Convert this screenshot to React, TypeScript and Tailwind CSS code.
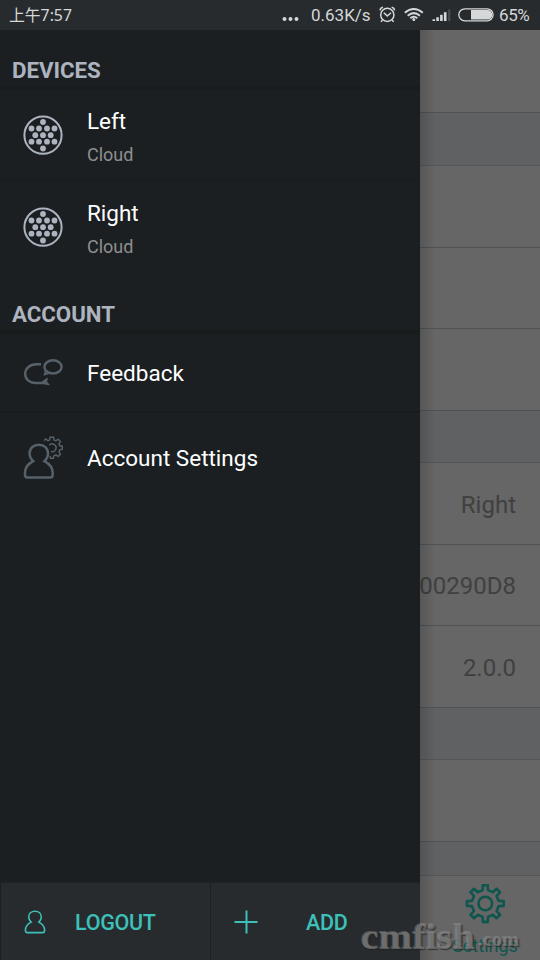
import type { ReactNode } from "react";

function gearPath(cx: number, cy: number, teeth: number, outer: number, inner: number, from = 0, to = teeth) {
  const step = (Math.PI * 2) / teeth;
  const point = (radius: number, angle: number) =>
    `${(cx + radius * Math.sin(angle)).toFixed(2)} ${(cy - radius * Math.cos(angle)).toFixed(2)}`;
  const points: string[] = [];
  for (let i = from; i < to; i++) {
    const a = i * step;
    points.push(point(inner, a - step * 0.25), point(outer, a - step * 0.17), point(outer, a + step * 0.17), point(inner, a + step * 0.25));
  }
  return `M${points.join("L")}${to - from === teeth ? "Z" : ""}`;
}

const SPEAKER_DOTS = [
  [20, 7], [8.5, 13.5], [16, 13.5], [24, 13.5], [31.5, 13.5],
  [12.3, 20.2], [20, 20.2], [27.7, 20.2],
  [8.5, 26.7], [16, 26.7], [24, 26.7], [31.5, 26.7], [20, 33.5],
];

function DeviceIcon() {
  return (
    <svg className="h-10 w-10" viewBox="0 0 40 40">
      <circle cx="20" cy="20.2" r="18.6" fill="none" stroke="#adb4bf" strokeWidth="2" />
      {SPEAKER_DOTS.map(([x, y]) => (
        <circle key={`${x}-${y}`} cx={x} cy={y} r="2.9" fill="#adb4bf" />
      ))}
    </svg>
  );
}

function FeedbackIcon() {
  return (
    <svg className="h-10 w-10" viewBox="0 0 40 40" fill="none" stroke="#57616a" strokeWidth="2.4">
      <path d="M18 11.3H13.5C6.5 11.3 2.2 15.7 2.2 20.7C2.2 26 6.3 30 13 30H21" />
      <path d="M19.5 28.6L24.3 25.2L23.6 28.8L26.2 31.8L20 30.6Z" fill="#57616a" strokeWidth="1" />
      <ellipse cx="30" cy="13.9" rx="8.6" ry="6.6" />
      <path d="M22.8 17L21.6 21.5L26 20.2" strokeWidth="1.6" />
    </svg>
  );
}

function AccountIcon() {
  return (
    <svg className="h-[44px] w-10" viewBox="0 0 40 44" fill="none" stroke="#57616a" strokeWidth="2.5">
      <path d="M10.2 25.2C7.8 23.2 6.6 20.8 6.6 17.3C6.6 12.1 10.4 8.7 15.8 8.7S25 12.1 25 17.3C25 20.8 23.8 23.2 21.4 25.2C26 27.6 29.7 31.5 29.7 37V39Q29.7 41.4 27.4 41.4H4.4Q2 41.4 2 39V37C2 31.5 5.6 27.6 10.2 25.2Z" />
      <path
        d="M21.2 4.6L22.9 2.9L25 4.7L26.8 3.9L27 1.2H30.6L30.9 3.9L33 4.8L35.1 3.1L37.5 5.6L35.9 7.8L36.8 9.8L39.3 10.2V13.5L36.8 13.9L35.9 16L37.5 18.1L35.1 20.5L33 18.9L30.9 19.8L30.4 22.2H27.6L27.1 20"
        strokeWidth="1.4"
      />
      <path d="M26.2 9.3A3.9 3.9 0 1 1 28 15.6" strokeWidth="1.5" />
    </svg>
  );
}

function SectionHeader({ children }: { children: string }) {
  return (
    <h2 className="flex h-[60px] items-end border-b-[4px] border-[#181c1d] pb-[3px] pl-3 text-[22.3px] leading-[26px] font-bold tracking-[-0.05px] text-[#adb4bf]">
      {children}
    </h2>
  );
}

function DeviceRow({ name, className }: { name: string; className: string }) {
  return (
    <div className={`flex items-center pl-[23px] ${className}`}>
      <DeviceIcon />
      <div className="ml-6 flex flex-col gap-[10px] pt-1">
        <span className="text-[22.5px] leading-[26px] text-white">{name}</span>
        <span className="text-[18px] leading-[21px] text-[#8e8f90]">Cloud</span>
      </div>
    </div>
  );
}

function FooterButton({ icon, children, className }: { icon: ReactNode; children: string; className: string }) {
  return (
    <button className={`flex h-full w-[210px] items-center border-l border-[#1c2023] bg-[#272b2e] text-[21.5px] font-medium text-[#3cc0b9] ${className}`}>
      {icon}
      <span className="pt-[2px] leading-[26px]">{children}</span>
    </button>
  );
}

function Cell({ children, className = "h-[81px]" }: { children?: string; className?: string }) {
  return (
    <div className={`box-content flex shrink-0 items-center justify-end border-b border-[#505253] pt-px pr-6 text-[24px] whitespace-nowrap text-[#404040] ${className}`}>
      <span className="pt-px">{children}</span>
    </div>
  );
}

function Gap({ className = "h-[52px]" }: { className?: string }) {
  return <div className={`shrink-0 border-b border-[#545657] bg-[#5f6162] ${className}`} />;
}

function StatusBar() {
  return (
    <header className="flex h-[30px] shrink-0 items-center bg-[#272b2e] pl-[9px] text-[17px] leading-[30px] text-[#d5d7d8]">
      <span className="flex w-[273px] items-center font-['Noto_Sans','Noto_Sans_CJK_SC',sans-serif] text-[15.8px]">上午7:57</span>
      <svg className="h-[30px] w-[18px]" viewBox="0 0 18 30" fill="#d5d7d8">
        <circle cx="2.5" cy="19" r="2" /><circle cx="8.5" cy="19" r="2" /><circle cx="14.5" cy="19" r="2" />
      </svg>
      <span className="ml-[11px] w-[68px]">0.63K/s</span>
      <svg className="h-[30px] w-[118px] shrink-0" viewBox="379 0 118 30" fill="none" stroke="#d5d7d8" strokeWidth="1.5">
        <circle cx="387.3" cy="14.9" r="6.6" />
        <path d="M383.8 12.7L387.3 16L391 12.7M380 10.3Q380.4 7.8 383 7.3M391.6 7.3Q394.2 7.8 394.6 10.3M382.5 20L381 21.9M392.1 20L393.6 21.9" />
        <path d="M404.8 12.7Q413.8 5.4 422.8 12.7M407.7 15.7Q413.8 10.6 419.9 15.7M410.3 18.2Q413.8 15.4 417.3 18.2" strokeWidth="2" />
        <circle cx="413.8" cy="19.5" r="1.5" fill="#d5d7d8" stroke="none" />
        <g fill="#d5d7d8" stroke="none">
          <rect x="432.5" y="19.3" width="2.6" height="1.7" />
          <rect x="436.3" y="17.3" width="2.6" height="3.7" />
          <rect x="440.1" y="14.8" width="2.6" height="6.2" />
          <rect x="443.9" y="12.2" width="2.6" height="8.8" />
          <rect x="448" y="9.5" width="2.4" height="11.5" fill="#484b4e" />
        </g>
        <rect x="458.8" y="8.8" width="34.3" height="12" rx="6" strokeWidth="1.3" />
        <path d="M471 10H487.5A4.8 4.8 0 0 1 487.5 19.6H471Z" fill="#d5d7d8" stroke="none" />
      </svg>
      <span className="ml-[2px] text-[17px] leading-[30px] tracking-[-0.4px]">65%</span>
    </header>
  );
}

export default function App() {
  return (
    <div className="relative flex h-[960px] w-[540px] flex-col overflow-hidden bg-[#666] font-[Roboto,sans-serif]">
      <StatusBar />
      <div className="flex min-h-0 flex-1">
        <aside className="flex w-[420px] shrink-0 flex-col bg-[#1b1f22]">
          <SectionHeader>DEVICES</SectionHeader>
          <DeviceRow name="Left" className="h-[91px] border-b-2 border-[#191d1f]" />
          <DeviceRow name="Right" className="h-[93px] pb-[2px]" />
          <SectionHeader>ACCOUNT</SectionHeader>
          <div className="flex h-[79px] items-center border-b-2 border-[#181c1e] pl-[23px] text-[22.5px] text-white">
            <FeedbackIcon />
            <span className="ml-6 pt-[2px]">Feedback</span>
          </div>
          <div className="flex h-[90px] items-center pl-[23px] text-[22.5px] text-white">
            <AccountIcon />
            <span className="ml-6 pt-[2px]">Account Settings</span>
          </div>
          <footer className="mt-auto flex h-[78px] border-t border-[#202427]">
            <FooterButton
              className="gap-[29px] pl-[23px] tracking-[-0.3px]"
              icon={
                <svg className="h-6 w-[22px]" viewBox="0 0 22 24" fill="none" stroke="#3cc0b9" strokeWidth="1.6">
                  <path d="M7.1 12.1C5.4 10.8 4.7 9 4.7 7.1C4.7 3.5 7.3 1.2 11 1.2S17.3 3.5 17.3 7.1C17.3 9 16.6 10.8 14.9 12.1C18.3 13.9 20.6 17 20.6 20.2Q20.6 22.6 18.7 22.6H3.3Q1.4 22.6 1.4 20.2C1.4 17 3.7 13.9 7.1 12.1Z" />
                </svg>
              }
            >
              LOGOUT
            </FooterButton>
            <FooterButton
              className="gap-[48px] pl-[23px] tracking-[-0.3px]"
              icon={
                <svg className="h-6 w-6" viewBox="0 0 24 24" stroke="#3cc0b9" strokeWidth="2">
                  <path d="M.5 12H23.5M12.5 .5V23.5" />
                </svg>
              }
            >
              ADD
            </FooterButton>
          </footer>
        </aside>
        <main className="relative flex min-w-0 flex-1 flex-col overflow-hidden bg-[#666]">
          <Cell className="h-[81px]" />
          <Gap className="h-[53px]" />
          <Cell className="h-[80px]" />
          <Cell className="h-[79px]" />
          <Cell className="h-[80px]" />
          <Gap />
          <Cell className="h-[80px]">Right</Cell>
          <Cell className="h-[79px]">00290D8</Cell>
          <Cell className="h-[80px]">2.0.0</Cell>
          <Gap />
          <Cell className="h-[80px]" />
          <Gap className="h-[34px]" />
          <div className="flex flex-1 flex-col items-center pt-[8px] pl-[10px] text-[18px] leading-[22px] text-[#0e564e]">
            <svg className="h-10 w-10" viewBox="0 0 40 40" fill="none" stroke="#0e564e" strokeWidth="2.6" strokeLinejoin="round">
              <path d={gearPath(20.3, 19.5, 8, 18.5, 13.6)} />
              <circle cx="20.3" cy="19.5" r="6.8" />
            </svg>
            <span className="mt-[11px]">Settings</span>
          </div>
          <div className="absolute inset-y-0 left-0 w-4 bg-linear-to-r from-black/15 to-transparent" />
        </main>
      </div>
      <div className="absolute bottom-[4px] left-[361px] flex items-baseline font-['Liberation_Serif',serif] font-bold text-[#888]/55 [text-shadow:-1px_-1px_0_#9996,1px_1px_1px_#222b]">
        <span className="w-[117px] origin-left scale-x-[1.12] text-[36px] leading-[38px]">cmfish</span>
        <span className="relative -top-[3px] origin-left scale-x-[1.08] text-[19px] leading-[20px]">.com</span>
      </div>
    </div>
  );
}
